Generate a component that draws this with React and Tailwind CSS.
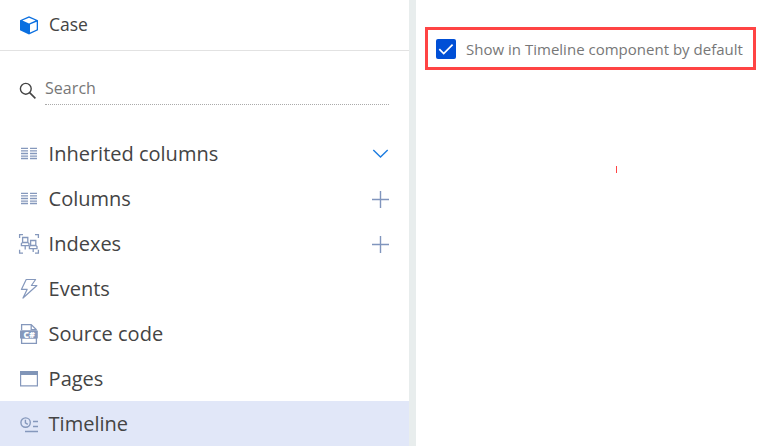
import React from "react";

const STROKE = "#8598bc";

function Svg({ children }) {
  return (
    <svg width="22" height="21" viewBox="0 0 22 21" fill="none" className="shrink-0">
      {children}
    </svg>
  );
}

function ColumnsIcon() {
  return (
    <Svg>
      <path
        d="M3 5.3h7M12 5.3h7M3 7.9h7M12 7.9h7M3 10.5h7M12 10.5h7M3 13.1h7M12 13.1h7M3 15.5h7M12 15.5h7"
        stroke={STROKE}
        strokeWidth="1.3"
      />
    </Svg>
  );
}

function IndexesIcon() {
  return (
    <Svg>
      <g stroke={STROKE} strokeWidth="1.3">
        <path d="M1.6 5V1.6H5M17 1.6h3.4V5M1.6 16.8v3.4H5M17 20.2h3.4v-3.4" />
        <path d="M4.6 4.5h5.2v5H4.6zM4.6 9.5l-1.2 1v2.1h7.6v-2.1l-1.2-1M7.2 12.6v4" />
        <path d="M12.6 7.5h5.2v5h-5.2zM12.6 12.5l-1.2 1v2.1h7.6v-2.1l-1.2-1M15.2 15.6v3.4" />
      </g>
    </Svg>
  );
}

function EventsIcon() {
  return (
    <Svg>
      <path d="M8.2 1.5H17.6L13.4 7.5H18.9L5 20L9.1 11.4H3.4z" stroke={STROKE} strokeWidth="1.2" strokeLinejoin="round" />
    </Svg>
  );
}

function SourceIcon() {
  return (
    <Svg>
      <path d="M3.6 7V1.6h9.6l5 5V7M3.6 15v5.4h14.8V15M13.2 1.6v5h5" stroke={STROKE} strokeWidth="1.3" />
      <rect x="2" y="7.2" width="17.8" height="8.5" rx="1" fill={STROKE} />
      <text x="11.2" y="14.6" textAnchor="middle" fontSize="8.5" fontWeight="800" fill="#fff" className="font-['Open_Sans',sans-serif]">
        C#
      </text>
    </Svg>
  );
}

function PagesIcon() {
  return (
    <Svg>
      <path d="M2.6 3.6h16.8v14.3H2.6z" stroke={STROKE} strokeWidth="1.2" />
      <path d="M2 3h18v4H2z" fill="#8095b8" />
    </Svg>
  );
}

function TimelineIcon() {
  return (
    <Svg>
      <g stroke={STROKE} strokeWidth="1.4">
        <circle cx="7.6" cy="9.6" r="4.7" />
        <path d="M7.4 6.8v3l2.4 1.6M15 8.5h5M15 13.5h5M7 18.5h13" />
      </g>
    </Svg>
  );
}

function Plus() {
  return (
    <svg width="17" height="17" viewBox="0 0 17 17" className="mt-0.5 mr-5">
      <path d="M8.5 0v17M0 8.5h17" stroke="#8095bd" strokeWidth="1.4" />
    </svg>
  );
}

function Chevron() {
  return (
    <svg width="17" height="17" viewBox="0 0 17 17" fill="none" className="mr-5">
      <path d="M1.3 5l7.2 7 7.2-7" stroke="#1c7ce0" strokeWidth="1.4" />
    </svg>
  );
}

const items = [
  { label: "Inherited columns", Icon: ColumnsIcon, Action: Chevron },
  { label: "Columns", Icon: ColumnsIcon, Action: Plus },
  { label: "Indexes", Icon: IndexesIcon, Action: Plus },
  { label: "Events", Icon: EventsIcon },
  { label: "Source code", Icon: SourceIcon },
  { label: "Pages", Icon: PagesIcon },
  { label: "Timeline", Icon: TimelineIcon, active: true },
];

export default function App() {
  return (
    <div className="flex h-[446px] w-[757px] overflow-hidden bg-white font-['Open_Sans',sans-serif] text-[#444]">
      <aside className="w-[409px] shrink-0">
        <header className="flex h-[51px] items-center border-b border-[#e2e2e2] pl-5">
          <svg width="18" height="19" viewBox="0 0 18 19" fill="none" className="shrink-0">
            <path d="M9 .3L18 4.2V14.2L9 18.4L0 14.2V4.2z" fill="#0a6fe0" />
            <path d="M9 1.8L15.6 4.6L9 7.4L2.4 4.6z" fill="#fff" />
            <path d="M10 8.6L16.7 5.7V13.5L10 16.6z" fill="#fff" />
          </svg>
          <span className="mb-0.5 ml-[11px] text-[17.5px] leading-6">Case</span>
        </header>
        <div className="flex h-20 pt-[26px] pl-[19px]">
          <svg width="18" height="18" viewBox="0 0 18 18" fill="none" className="mt-[5px] shrink-0">
            <circle cx="6.8" cy="6.8" r="5.4" stroke="#444" strokeWidth="1.4" />
            <path d="M10.6 10.6l5.8 5.8" stroke="#444" strokeWidth="1.6" />
          </svg>
          <div className="ml-2 h-7 w-[344px] border-b border-dotted border-[#aaa] text-[16px] leading-[22px] tracking-[0.05px] text-[#777]">
            Search
          </div>
        </div>
        <nav>
          {items.map(({ label, Icon, Action, active }) => (
            <div key={label} className={`flex h-[45px] items-center pl-[18px] ${active ? "bg-[#e1e7f8]" : ""}`}>
              <Icon />
              <span className="ml-[8.6px] flex-1 text-[20px] leading-[27px]">{label}</span>
              {Action && <Action />}
            </div>
          ))}
        </nav>
      </aside>
      <div className="w-[7px] shrink-0 bg-[#e8eded]" />
      <main className="flex flex-1 flex-col pt-[27px] pl-[9px]">
        <div className="flex h-[43px] w-[331px] items-center border-[3px] border-[#ff4444] pl-2">
          <span className="flex size-5 items-center justify-center rounded-[2px] bg-[#004fd6]">
            <svg width="16" height="14" viewBox="0 0 16 14" fill="none">
              <path d="M1.3 7.2l4.4 4.4L14.6 2.6" stroke="#fff" strokeWidth="1.7" />
            </svg>
          </span>
          <span className="ml-[10px] text-[15px] leading-5 tracking-[0.01px] whitespace-nowrap text-[#777]">
            Show in Timeline component by default
          </span>
        </div>
        <div className="mt-24 ml-[191px] h-[7px] w-px bg-[#ff4444]" />
      </main>
    </div>
  );
}
